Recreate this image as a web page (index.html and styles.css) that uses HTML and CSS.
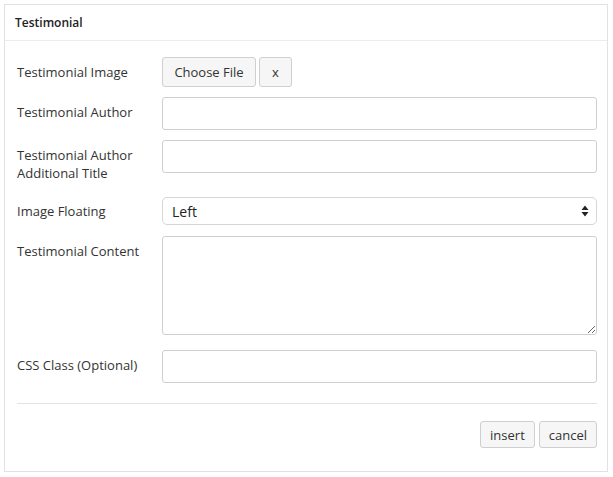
FILE: index.html
```html
<!DOCTYPE html>
<html>
<head>
<meta charset="utf-8">
<link rel="stylesheet" href="styles.css">
</head>
<body>
<div class="panel">
  <div class="panel-head">Testimonial</div>
  <div class="panel-body">
    <div class="row row-img">
      <label class="lbl">Testimonial Image</label>
      <div class="ctrl ctrl-inline">
        <button class="btn btn-file">Choose File</button>
        <button class="btn btn-x">x</button>
      </div>
    </div>
    <div class="row">
      <label class="lbl">Testimonial Author</label>
      <div class="ctrl"><input class="inp" type="text"></div>
    </div>
    <div class="row row-two">
      <label class="lbl">Testimonial Author<br>Additional Title</label>
      <div class="ctrl"><input class="inp" type="text"></div>
    </div>
    <div class="row row-sel">
      <label class="lbl">Image Floating</label>
      <div class="ctrl">
        <div class="sel-wrap">
          <select class="sel"><option>Left</option></select>
          <svg class="sel-arrow" width="8" height="12" viewBox="0 0 8 12"><path d="M4 0.5 L7.5 5 L0.5 5 Z M4 11.5 L7.5 7 L0.5 7 Z" fill="#222"/></svg>
        </div>
      </div>
    </div>
    <div class="row row-ta">
      <label class="lbl">Testimonial Content</label>
      <div class="ctrl"><textarea class="ta"></textarea></div>
    </div>
    <div class="row row-last">
      <label class="lbl">CSS Class (Optional)</label>
      <div class="ctrl"><input class="inp" type="text"></div>
    </div>
    <div class="sep"></div>
    <div class="actions">
      <button class="btn btn-act">insert</button>
      <button class="btn btn-act">cancel</button>
    </div>
  </div>
</div>
</body>
</html>
```
FILE: styles.css
```css
* { box-sizing: border-box; }
html, body { background: #ffffff; }
body {
  margin: 4px 5px 4px 4px;
  font-family: "Open Sans", "Liberation Sans", sans-serif;
  color: #333333;
}
.panel {
  width: 604px;
  height: 468px;
  border: 1px solid #e2e2e2;
  box-shadow: 1px 1px 0 #f0f0f0;
  background: #ffffff;
}
.panel-head {
  height: 36px;
  border-bottom: 1px solid #ececec;
  padding: 0 10px;
  font-size: 12px;
  font-weight: 600;
  color: #222222;
  line-height: 35px;
}
.panel-body {
  padding: 16px 10px 0 12px;
}
.row {
  display: flex;
  align-items: flex-start;
  margin-bottom: 10px;
}
.lbl {
  width: 145px;
  flex: none;
  font-size: 13px;
  line-height: 18px;
  padding-top: 6px;
  color: #333333;
}
.row-two { margin-bottom: 15px; }
.row-sel { margin-bottom: 11px; }
.row-sel .lbl { padding-top: 5px; }
.row-ta { margin-bottom: 15px; }
.row-last { margin-bottom: 0; }
.ctrl { flex: 1; min-width: 0; }
.ctrl-inline { display: flex; gap: 3px; }
.btn {
  font-family: "Open Sans", "Liberation Sans", sans-serif;
  font-size: 13px;
  color: #333333;
  background: #f6f6f6;
  border: 1px solid #cfcfcf;
  border-radius: 3px;
  padding: 0;
  margin: 0;
}
.btn-file { width: 94px; height: 30px; }
.btn-x { width: 33px; height: 30px; }
.inp {
  display: block;
  width: 100%;
  height: 33px;
  border: 1px solid #cfcfcf;
  border-radius: 3px;
  background: #ffffff;
  margin: 0;
}
.sel-wrap { position: relative; }
.sel {
  display: block;
  width: 100%;
  height: 28px;
  -webkit-appearance: none;
  appearance: none;
  border: 1px solid #d6d6d6;
  border-radius: 5px;
  background: #ffffff;
  font-family: "Open Sans", "Liberation Sans", sans-serif;
  font-size: 14px;
  color: #222222;
  padding: 0 0 0 9px;
  margin: 0;
}
.sel-arrow {
  position: absolute;
  right: 8px;
  top: 8px;
}
.ta {
  display: block;
  width: 100%;
  height: 99px;
  border: 1px solid #cfcfcf;
  border-radius: 3px;
  resize: vertical;
  margin: 0;
  background: #ffffff;
}
.sep {
  height: 1px;
  background: #e3e3e3;
  margin-top: 20px;
}
.actions {
  display: flex;
  justify-content: flex-end;
  gap: 4px;
  padding-top: 17px;
}
.btn-act { height: 27px; padding: 0 9px; }
```
